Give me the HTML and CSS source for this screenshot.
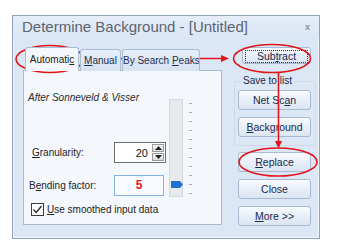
FILE: index.html
```html
<!DOCTYPE html>
<html lang="en">
<head>
	<meta charset="UTF-8">
	<title>Determine Background</title>
<link rel="stylesheet" href="styles.css">
</head>
<body>
	<div class="window">
		<div class="titlebar">
			<span class="title">Determine Background - [Untitled]</span>
			<span class="close">x</span>
		</div>
		<div class="main">
			<div class="left">
				<div class="tabs">
					<div class="tab active">Automati<u>c</u></div>
					<div class="tab"><u>M</u>anual</div>
					<div class="tab wide">By Search <u>P</u>eaks</div>
				</div>
				<div class="panel">
					<div class="top">
						<div class="fields">
							<div class="caption">After Sonneveld &amp; Visser</div>
							<div class="row gran">
								<span class="label"><u>G</u>ranularity:</span>
								<div class="spin">
									<span class="val">20</span>
									<div class="arrows">
										<span class="arr"><svg width="7" height="4" viewBox="0 0 7 4"><path d="M0 4 L3.5 0 L7 4 Z" fill="#222"/></svg></span>
										<span class="arr"><svg width="7" height="4" viewBox="0 0 7 4"><path d="M0 0 L3.5 4 L7 0 Z" fill="#222"/></svg></span>
									</div>
								</div>
							</div>
							<div class="row bend">
								<span class="label">B<u>e</u>nding factor:</span>
								<div class="factor">5</div>
							</div>
						</div>
						<div class="slider">
							<div class="track">
								<svg class="thumb" width="12" height="7" viewBox="0 0 12 7"><path d="M0 0 H9 L12 3.5 L9 7 H0 Z" fill="#1f6fd2"/></svg>
							</div>
							<div class="ticks">
								<span></span><span></span><span></span><span></span><span></span><span></span>
								<span></span><span></span><span></span><span></span><span></span>
							</div>
						</div>
					</div>
					<div class="check">
						<span class="box"><svg width="11" height="11" viewBox="0 0 11 11"><path d="M1.5 5.5 L4.2 8.5 L9.5 2" fill="none" stroke="#222" stroke-width="1.2"/></svg></span>
						<span><u>U</u>se smoothed input data</span>
					</div>
				</div>
			</div>
			<div class="right">
				<button class="btn subtract"><span class="focus">Sub<u>t</u>ract</span></button>
				<fieldset class="group">
					<legend>Save to list</legend>
					<button class="btn">Net Sc<u>a</u>n</button>
					<button class="btn"><u>B</u>ackground</button>
				</fieldset>
				<button class="btn replace"><u>R</u>eplace</button>
				<button class="btn">Close</button>
				<button class="btn"><u>M</u>ore &gt;&gt;</button>
			</div>
		</div>
	</div>

	<!-- red annotation marks drawn over the dialog -->
	<svg class="marks" width="340" height="247" viewBox="0 0 340 247">
		<g fill="none" stroke="#e3141c" stroke-width="1.6">
			<ellipse cx="50" cy="59" rx="34" ry="13.5"/>
			<line x1="84" y1="58.5" x2="222" y2="58.5"/>
			<ellipse cx="272" cy="58.5" rx="38.5" ry="14"/>
			<line x1="278.5" y1="72.5" x2="278.5" y2="142"/>
			<ellipse cx="278" cy="162" rx="39" ry="14"/>
		</g>
		<g fill="#e3141c">
			<path d="M221 55 L229 58.5 L221 62 Z"/>
			<path d="M275 141 L278.5 148.5 L282 141 Z"/>
		</g>
	</svg>
</body>
</html>
```

FILE: styles.css
```css
body {margin: 0; background: #fff; font-family: "Liberation Sans", Arial, sans-serif; font-size: 10px; color: #222;}
u {text-decoration: underline; text-underline-offset: 1px;}

.window {box-sizing: border-box; width: 308px; height: 224px; margin: 15px 0 0 12px; border: 1px solid #8ea2bd; background: #dce7f5; box-shadow: inset 0 0 0 1px #eef3fa;}
.titlebar {display: flex; justify-content: space-between; align-items: center; height: 21px; padding: 0 9px 0 9px; background: linear-gradient(#e4edf8, #dce7f5);}
.title {font-size: 15px; color: #5d6470; line-height: 21px;}
.close {font-size: 9px; color: #8a9098; font-weight: bold;}

.main {display: flex; padding-left: 10px;}
.left {width: 199px; margin-top: 10px;}

.tabs {display: flex; align-items: flex-end; height: 24px; margin-bottom: -1px; position: relative; z-index: 1;}
.tab {box-sizing: border-box; height: 22px; width: 41px; margin-left: 1px; border: 1px solid #a9bcd3; border-bottom: none; border-radius: 3px 3px 0 0; background: linear-gradient(#e6eef8, #d6e2f1); text-align: center; line-height: 21px; color: #1c3050; white-space: nowrap; overflow: hidden;}
.tab.active {height: 24px; width: 54px; margin-left: 2px; background: #f4f8fd; line-height: 23px; color: #222;}
.tab.wide {width: 78px; margin-left: 1px;}

.panel {box-sizing: border-box; height: 155px; border: 1px solid #a7bad0; background: #f4f8fd; padding: 21px 0 0 4px;}
.top {display: flex;}
.fields {width: 141px;}
.caption {font-style: italic; line-height: 12px; color: #2a2a2a;}
.row {display: flex; align-items: center;}
.row .label {width: 86px; box-sizing: border-box;}
.gran {margin-top: 38px; height: 21px;}
.gran .label {padding-left: 4px;}
.bend {margin-top: 12px; height: 21px;}
.bend .label {padding-left: 1px;}

.spin {box-sizing: border-box; display: flex; align-items: center; justify-content: flex-end; width: 52px; height: 21px; border: 1px solid #6f6f6f; background: #fff; padding-right: 1px;}
.spin .val {font-size: 11px; margin-right: 4px; color: #111;}
.arrows {display: flex; flex-direction: column; gap: 1px;}
.arr {box-sizing: border-box; display: flex; align-items: center; justify-content: center; width: 12px; height: 8px; border: 1px solid #9a9a9a; background: linear-gradient(#f6f6f6, #dcdcdc);}

.factor {box-sizing: border-box; width: 50px; height: 21px; border: 1px solid #84b4e6; background: #f7fbff; color: #e8141c; font-weight: bold; font-size: 12px; text-align: center; line-height: 19px;}

.slider {display: flex; margin-top: 7px;}
.track {position: relative; box-sizing: border-box; width: 14px; height: 98px; border: 1px solid #d3d8de; background: #e7eaed;}
.thumb {position: absolute; left: 1px; top: 81px;}
.ticks {display: flex; flex-direction: column; gap: 8px; margin: 4px 0 0 6px;}
.ticks span {display: block; width: 3px; height: 1px; background: #a8acb2;}

.check {display: flex; align-items: center; margin-top: 6px; padding-left: 3px; height: 13px;}
.check .box {box-sizing: border-box; display: flex; align-items: center; justify-content: center; width: 13px; height: 13px; border: 1px solid #3a3a3a; background: #fff; margin-right: 3px;}

.right {display: flex; flex-direction: column; width: 82px; margin: 10px 0 0 12px;}
.btn {box-sizing: border-box; display: block; width: 73px; height: 20px; margin: 0 0 0 4px; padding: 0; border: 1px solid #a7bad1; border-radius: 3px; background: linear-gradient(#f8fbfe, #e8eff8 50%, #dbe5f2); font-family: inherit; font-size: 10.5px; color: #17294a; line-height: 18px;}
.subtract {width: 69px; height: 17px; margin-left: 8px; padding: 2px;}
.subtract .focus {display: block; border: 1px dotted #333; line-height: 11px; height: 11px;}
.group {margin: 11px 0 0 0; padding: 3px 3px 8px 3px; border: 1px solid #cfdae7; border-radius: 2px;}
.group legend {padding: 0 2px; margin-left: 3px; line-height: 12px; color: #17294a;}
.group .btn {margin-left: 0;}
.group .btn + .btn {margin-top: 7px;}
.replace {margin-top: 6px;}
.right > .btn + .btn {margin-top: 7px;}

.marks {position: absolute; left: 0; top: 0;}
```
